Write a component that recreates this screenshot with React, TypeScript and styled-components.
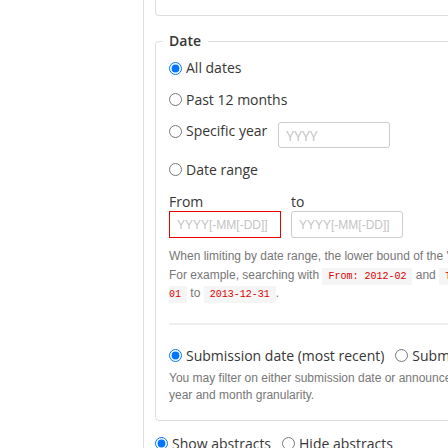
import React from "react";
import styled, { createGlobalStyle } from "styled-components";

const GlobalStyle = createGlobalStyle`
  html, body { margin: 0; padding: 0; background: #fff; overflow: hidden; }
  body { font-family: "Open Sans", "Noto Sans", sans-serif; color: #363636; }
`;

const Page = styled.div`
  display: flex;
  width: 1400px;
  height: 100vh;
`;

const Sidebar = styled.aside`
  flex: 0 0 143px;
  border-right: 1px solid #ddd;
`;

const Main = styled.main`
  flex: 0 0 auto;
  width: 1000px;
  padding-left: 11px;
`;

const PrevSection = styled.div`
  height: 15px;
  border: 1px solid #ddd;
  border-top: none;
  border-radius: 0 0 4px 4px;
`;

const Fieldset = styled.fieldset`
  margin: 15px 0 0;
  padding: 7px 13px 16px;
  border: 1px solid #ddd;
  border-radius: 4px;
  min-width: 0;
`;

const Legend = styled.legend`
  padding: 0 7px;
  margin-left: -7px;
  font-size: 14px;
  font-weight: 600;
  line-height: 20px;
  color: #363636;
`;

const Stack = styled.div`
  display: flex;
  flex-direction: column;
  align-items: flex-start;
`;

const OptionRow = styled.div`
  display: flex;
  align-items: flex-start;
  gap: 11px;
  & + & { margin-top: 11.5px; }
`;

const RadioLabel = styled.label`
  display: inline-flex;
  align-items: center;
  height: 20px;
  font-size: 14px;
  line-height: 20px;
  color: #363636;
  white-space: nowrap;
`;

const Radio = styled.input.attrs({ type: "radio" })`
  width: 13px;
  height: 13px;
  margin: 0 4px 0 0;
  flex: 0 0 auto;
`;

const TextInput = styled.input<{ $mono?: boolean; $invalid?: boolean }>`
  box-sizing: border-box;
  width: 112px;
  height: ${(p) => (p.$mono ? 27 : 26)}px;
  margin-top: ${(p) => (p.$mono ? 0 : 1)}px;
  padding: 0 7px;
  border: 1px solid ${(p) => (p.$invalid ? "#e00" : "#ccc")};
  border-radius: ${(p) => (p.$invalid ? 0 : 3)}px;
  background: #fff;
  font-family: ${(p) => (p.$mono ? '"Liberation Sans", Arial, sans-serif' : '"Open Sans", sans-serif')};
  font-size: ${(p) => (p.$mono ? 12 : 14)}px;
  color: #363636;
  outline: none;
  &::placeholder { color: #c4c4c4; }
`;

const RangeGrid = styled.div`
  display: grid;
  grid-template-columns: 112px 112px;
  column-gap: 10px;
  margin-top: 12.5px;
`;

const RangeField = styled.div`
  display: flex;
  flex-direction: column;
`;

const FieldLabel = styled.label`
  font-size: 14px;
  line-height: 19px;
  color: #363636;
`;

const Help = styled.p<{ $first?: boolean }>`
  margin: ${(p) => (p.$first ? "9px 0 0" : "4px 0 0")};
  font-family: "Liberation Sans", Arial, sans-serif;
  font-size: 12px;
  line-height: ${(p) => (p.$first ? 18.5 : 17)}px;
  color: #777;
  white-space: nowrap;
`;

const Code = styled.code`
  font-family: "Liberation Mono", "Courier New", monospace;
  font-size: 10px;
  line-height: 1;
  color: #d00;
  background: #f5f5f5;
  padding: 3px 6px;
`;

const Divider = styled.hr`
  align-self: stretch;
  height: 2px;
  margin: 20px 0 0;
  border: none;
  background: #eee;
`;

const RadioGroup = styled.div<{ $top: number }>`
  display: flex;
  gap: 11px;
  margin-top: ${(p) => p.$top}px;
`;

export default function App() {
  return (
    <>
      <GlobalStyle />
      <Page>
        <Sidebar />
        <Main>
          <PrevSection />
          <Fieldset>
            <Legend>Date</Legend>
            <Stack>
              <OptionRow>
                <RadioLabel>
                  <Radio name="date" defaultChecked />
                  All dates
                </RadioLabel>
              </OptionRow>
              <OptionRow>
                <RadioLabel>
                  <Radio name="date" />
                  Past 12 months
                </RadioLabel>
              </OptionRow>
              <OptionRow>
                <RadioLabel>
                  <Radio name="date" />
                  Specific year
                </RadioLabel>
                <TextInput placeholder="YYYY" />
              </OptionRow>
              <OptionRow>
                <RadioLabel>
                  <Radio name="date" />
                  Date range
                </RadioLabel>
              </OptionRow>
              <RangeGrid>
                <RangeField>
                  <FieldLabel>From</FieldLabel>
                  <TextInput $mono $invalid placeholder="YYYY[-MM[-DD]]" />
                </RangeField>
                <RangeField>
                  <FieldLabel>to</FieldLabel>
                  <TextInput $mono placeholder="YYYY[-MM[-DD]]" />
                </RangeField>
              </RangeGrid>
              <Help $first>
                When limiting by date range, the lower bound of the "from" date and the upper bound of the "to" date are used.
                <br />
                For example, searching with <Code>From: 2012-02</Code> and <Code>To: 2013</Code> will search for papers
                submitted from <Code>2012-02-<br />01</Code> to <Code>2013-12-31</Code>.
              </Help>
              <Divider />
              <RadioGroup $top={21}>
                <RadioLabel>
                  <Radio name="datetype" defaultChecked />
                  Submission date (most recent)
                </RadioLabel>
                <RadioLabel>
                  <Radio name="datetype" />
                  Submission date (original)
                </RadioLabel>
                <RadioLabel>
                  <Radio name="datetype" />
                  Announcement date
                </RadioLabel>
              </RadioGroup>
              <Help>
                You may filter on either submission date or announcement date. Note that announcement date supports only
                <br />
                year and month granularity.
              </Help>
            </Stack>
          </Fieldset>
          <RadioGroup $top={13}>
            <RadioLabel>
              <Radio name="abstracts" defaultChecked />
              Show abstracts
            </RadioLabel>
            <RadioLabel>
              <Radio name="abstracts" />
              Hide abstracts
            </RadioLabel>
          </RadioGroup>
        </Main>
      </Page>
    </>
  );
}
